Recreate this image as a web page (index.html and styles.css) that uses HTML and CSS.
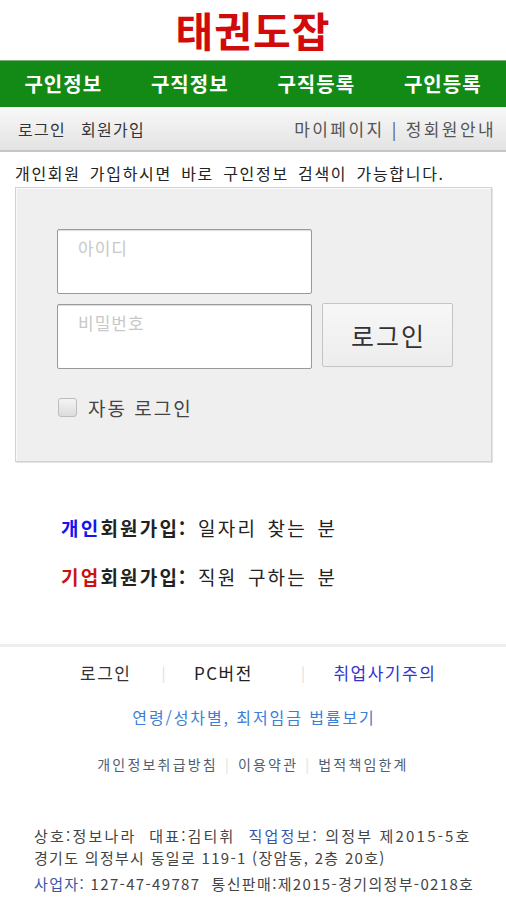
FILE: index.html
```html
<!DOCTYPE html>
<html lang="ko">
<head>
<meta charset="utf-8">
<title>태권도잡</title>
<link rel="stylesheet" href="styles.css">
</head>
<body>
<header class="top">
  <h1 class="logo">태권도잡</h1>
</header>
<nav class="mainnav">
  <a>구인정보</a>
  <a>구직정보</a>
  <a>구직등록</a>
  <a>구인등록</a>
</nav>
<div class="subbar">
  <div class="sub-left"><a>로그인</a><a>회원가입</a></div>
  <div class="sub-right">마이페이지 | 정회원안내</div>
</div>
<p class="notice">개인회원 가입하시면 바로 구인정보 검색이 가능합니다.</p>
<section class="loginbox">
  <div class="loginform">
    <div class="fields">
      <div class="field"><span class="ph">아이디</span></div>
      <div class="field"><span class="ph">비밀번호</span></div>
    </div>
    <button class="loginbtn">로그인</button>
  </div>
  <label class="auto"><span class="chk"></span>자동 로그인</label>
</section>
<section class="join">
  <p class="joinrow"><b><span class="blue">개인</span>회원가입:</b> 일자리 찾는 분</p>
  <p class="joinrow"><b><span class="red">기업</span>회원가입:</b> 직원 구하는 분</p>
</section>
<footer class="foot">
  <div class="links1">
    <a class="l1">로그인</a><span class="sep">|</span><a class="l2">PC버전</a><span class="sep">|</span><a class="l3">취업사기주의</a>
  </div>
  <div class="links2">연령/성차별, 최저임금 법률보기</div>
  <div class="links3"><a>개인정보취급방침</a><span class="sep2">|</span><a>이용약관</a><span class="sep2">|</span><a>법적책임한계</a></div>
  <div class="info">
    <p class="ln1">상호:정보나라&nbsp; 대표:김티휘&nbsp; <span class="key">직업정보:</span> 의정부 제2015-5호</p>
    <p class="ln2">경기도 의정부시 동일로 119-1 (장암동, 2층 20호)</p>
    <p class="ln3 gap"><span class="key">사업자:</span> 127-47-49787&nbsp; 통신판매:제2015-경기의정부-0218호</p>
    <p class="ln3 gap">전화: 031-0000-0000&nbsp; 팩스: 031-000-0000</p>
  </div>
</footer>
</body>
</html>
```

FILE: styles.css
```css
* { box-sizing: border-box; }
html, body { margin: 0; padding: 0; }
body {
  width: 506px;
  background: #fff;
  font-family: "Noto Sans CJK KR", "Noto Sans", sans-serif;
  color: #222;
  overflow: hidden;
}
p { margin: 0; }
a { text-decoration: none; color: inherit; }

.top {
  padding: 2px 0 4px;
  text-align: center;
}
.logo {
  margin: 0;
  font-size: 41px;
  font-weight: 700;
  color: #d10a0a;
  line-height: 54px;
  letter-spacing: 1px;
}

.mainnav {
  height: 47px;
  background: #148a16;
  border-top: 1px solid #7fae7f;
  display: grid;
  grid-template-columns: repeat(4, 1fr);
  align-items: center;
  text-align: center;
}
.mainnav a {
  color: #fff;
  font-size: 20px;
  font-weight: 700;
  letter-spacing: 1px;
  padding-bottom: 2px;
}

.subbar {
  height: 45px;
  background: linear-gradient(#f8f8f8, #e3e3e3);
  border-bottom: 2px solid #c6c6c6;
  display: flex;
  align-items: center;
  justify-content: space-between;
  padding: 0 10px 0 18px;
}
.sub-left { display: flex; gap: 15px; font-size: 16px; color: #333; letter-spacing: 1.3px; }
.sub-right { font-size: 17px; color: #555; letter-spacing: 2.4px; }

.notice {
  font-size: 16px;
  color: #222;
  padding: 10px 0 0 15px;
  line-height: 22px;
  letter-spacing: 1.7px;
  word-spacing: 3px;
}

.loginbox {
  margin: 3px 14px 0 15px;
  height: 275px;
  background: #efefef;
  border: 1px solid #d2d2d2;
  box-shadow: inset 1px 1px 0 #fafafa, 1px 1px 0 #e4e4e4;
  padding: 41px 0 0 41px;
}
.loginform {
  display: flex;
  align-items: flex-end;
  gap: 10px;
}
.fields { display: flex; flex-direction: column; gap: 10px; }
.field {
  width: 255px;
  height: 65px;
  background: #fff;
  border: 1px solid #9a9a9a;
  border-radius: 2px;
  box-shadow: inset 0 1px 1px #ddd;
  padding: 6px 0 0 20px;
}
.ph { font-size: 17px; color: #c8c8c8; line-height: 24px; letter-spacing: 1px; }
.loginbtn {
  width: 131px;
  height: 64px;
  margin-bottom: 2px;
  background: linear-gradient(#f7f7f7, #ededed);
  border: 1px solid #c4c4c4;
  border-radius: 2px;
  font-family: inherit;
  font-size: 25px;
  color: #333;
  letter-spacing: 2px;
  padding: 0 0 0 2px;
}
.auto {
  display: flex;
  align-items: center;
  gap: 11px;
  margin-top: 25px;
  font-size: 19px;
  color: #444;
  padding-left: 1px;
  letter-spacing: 2px;
}
.chk {
  width: 19px;
  height: 19px;
  border: 1px solid #bdbdbd;
  border-radius: 3px;
  background: linear-gradient(#f4f4f4, #dcdcdc);
}

.join {
  padding: 51px 0 0 61px;
  display: flex;
  flex-direction: column;
  gap: 20px;
}
.joinrow { font-size: 19px; line-height: 29px; color: #222; letter-spacing: 2.2px; word-spacing: 3px; }
.joinrow b { font-weight: 700; color: #222; }
.blue { color: #1515f0; }
.red { color: #cc1111; }

.foot {
  margin-top: 53px;
  border-top: 3px solid #eeeeee;
}
.links1 {
  display: flex;
  align-items: center;
  height: 48px;
  padding-top: 2px;
  font-size: 17px;
  letter-spacing: 1.5px;
}
.links1 .l1 { margin-left: 80px; color: #333; }
.links1 .l2 { color: #222; }
.links1 .l3 { color: #3434d0; }
.links1 .sep { color: #e0e0e0; font-size: 15px; }
.links1 .sep:nth-of-type(1) { margin: 0 27px 0 30px; }
.links1 .sep:nth-of-type(2) { margin: 0 27px 0 48px; }
.links2 {
  text-align: center;
  font-size: 16px;
  color: #3b7fd8;
  height: 45px;
  line-height: 45px;
  padding-left: 2px;
  letter-spacing: 1.9px;
}
.links3 {
  text-align: center;
  font-size: 14px;
  color: #506070;
  line-height: 48px;
  height: 48px;
  letter-spacing: 2.2px;
}
.sep2 { color: #e0e0e0; margin: 0 7px; }
.info {
  padding: 37px 0 0 34px;
  font-size: 15px;
  color: #444;
  line-height: 22px;
}
.info .ln1 { letter-spacing: 2.2px; }
.info .ln2 { letter-spacing: 1.3px; }
.info .ln3 { letter-spacing: 1.35px; }
.info .gap { margin-top: 4px; }
.key { color: #3656aa; }
```
